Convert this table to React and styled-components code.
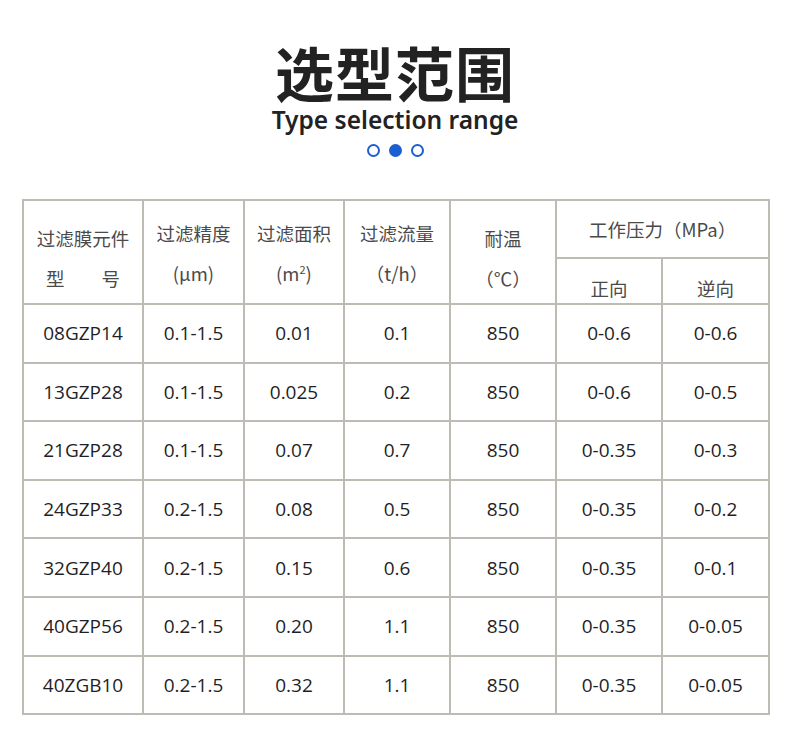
import React from 'react';
import styled, { createGlobalStyle } from 'styled-components';

const rows = [
    ['08GZP14', '0.1-1.5', '0.01', '0.1', '850', '0-0.6', '0-0.6'],
    ['13GZP28', '0.1-1.5', '0.025', '0.2', '850', '0-0.6', '0-0.5'],
    ['21GZP28', '0.1-1.5', '0.07', '0.7', '850', '0-0.35', '0-0.3'],
    ['24GZP33', '0.2-1.5', '0.08', '0.5', '850', '0-0.35', '0-0.2'],
    ['32GZP40', '0.2-1.5', '0.15', '0.6', '850', '0-0.35', '0-0.1'],
    ['40GZP56', '0.2-1.5', '0.20', '1.1', '850', '0-0.35', '0-0.05'],
    ['40ZGB10', '0.2-1.5', '0.32', '1.1', '850', '0-0.35', '0-0.05'],
];

const widths = [120, 101, 100, 106, 106, 106, 107];

function App() {
    return (
        <Page>
            <GlobalStyle />
            <Heading>
                <Title>选型范围</Title>
                <Subtitle>Type selection range</Subtitle>
                <Dots>
                    <Dot />
                    <Dot filled />
                    <Dot />
                </Dots>
            </Heading>
            <Table>
                <colgroup>
                    {widths.map((w, i) => <col key={i} style={{ width: w }} />)}
                </colgroup>
                <thead>
                    <tr>
                        <HeadCell rowSpan={2} shift={12}>
                            <Line>过滤膜元件</Line>
                            <Line><Spread><span>型</span><span>号</span></Spread></Line>
                        </HeadCell>
                        <HeadCell rowSpan={2} shift={2}>
                            <Line>过滤精度</Line>
                            <Line>(μm)</Line>
                        </HeadCell>
                        <HeadCell rowSpan={2} shift={2}>
                            <Line>过滤面积</Line>
                            <Line>(m<sup>2</sup>)</Line>
                        </HeadCell>
                        <HeadCell rowSpan={2} shift={2}>
                            <Line>过滤流量</Line>
                            <Line>（t/h）</Line>
                        </HeadCell>
                        <HeadCell rowSpan={2} shift={12}>
                            <Line>耐温</Line>
                            <Line>（℃）</Line>
                        </HeadCell>
                        <HeadCell colSpan={2} top>
                            <Line>工作压力（MPa）</Line>
                        </HeadCell>
                    </tr>
                    <tr>
                        <HeadCell sub>正向</HeadCell>
                        <HeadCell sub>逆向</HeadCell>
                    </tr>
                </thead>
                <tbody>
                    {rows.map((r) => (
                        <tr key={r[0]}>
                            {r.map((v, i) => <Cell key={i}>{v}</Cell>)}
                        </tr>
                    ))}
                </tbody>
            </Table>
        </Page>
    );
}

export default App;

const GlobalStyle = createGlobalStyle`
body {
    margin: 0;
    background: #fff;
}
`;

const Page = styled.div`
width: 790px;
height: 751px;
padding-top: 42px;
box-sizing: border-box;
background: #fff;
`;

const Heading = styled.div`
display: flex;
flex-direction: column;
align-items: center;
`;

const Title = styled.h1`
margin: 0;
font-family: "Noto Sans CJK SC", sans-serif;
font-weight: 700;
font-size: 59px;
line-height: 60px;
color: #222;
letter-spacing: 1px;
`;

const Subtitle = styled.div`
margin-top: 4px;
font-family: "Noto Sans", sans-serif;
font-weight: 600;
font-size: 24.5px;
line-height: 28px;
color: #222;
`;

const Dots = styled.div`
display: flex;
gap: 9px;
margin-top: 10px;
`;

const Dot = styled.span`
width: 13px;
height: 13px;
box-sizing: border-box;
border-radius: 50%;
border: 2px solid #1c5fd2;
background: ${(p) => (p.filled ? '#1c5fd2' : 'transparent')};
`;

const Table = styled.table`
margin: 42px 0 0 22px;
width: 746px;
border-collapse: collapse;
table-layout: fixed;
`;

const HeadCell = styled.th`
border: 2px solid #bdbbb4;
font-family: "Noto Sans CJK SC", sans-serif;
font-weight: 400;
font-size: 18.5px;
color: #4a4a4a;
text-align: center;
vertical-align: ${(p) => (p.sub ? 'bottom' : 'middle')};
height: ${(p) => (p.top ? '56px' : p.sub ? '43px' : 'auto')};
padding: ${(p) => (p.sub ? '0 0 1px' : `${p.shift || 0}px 0 0`)};
line-height: ${(p) => (p.sub ? '28px' : '40px')};

sup {
    font-size: 11px;
    line-height: 0;
}
`;

const Line = styled.div`
line-height: 40px;
`;

const Spread = styled.span`
display: inline-flex;
justify-content: space-between;
width: 74px;
`;

const Cell = styled.td`
border: 2px solid #bdbbb4;
height: 56.6px;
padding: 0;
text-align: center;
font-family: "Open Sans", sans-serif;
font-size: 19px;
color: #1f1f26;
`;
